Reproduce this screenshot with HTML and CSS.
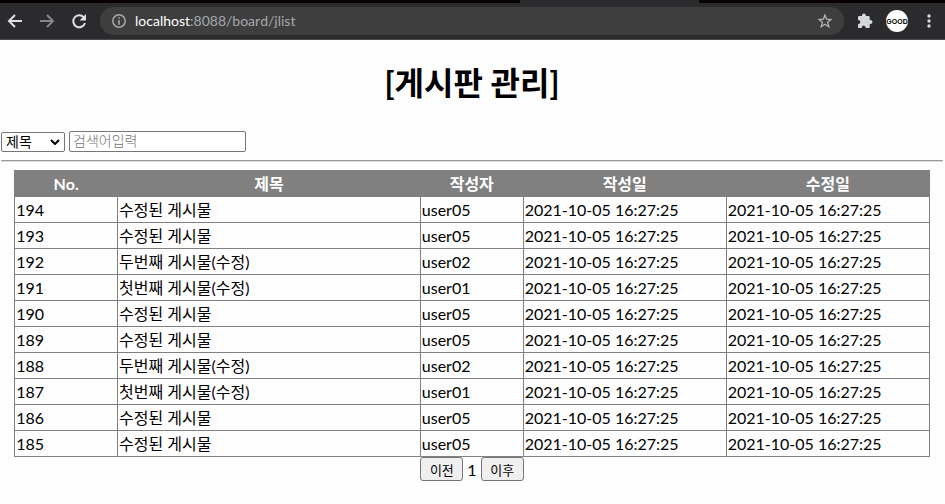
FILE: index.html
```html
<!DOCTYPE html>
<html lang="ko">

<head>
    <meta charset="UTF-8">
    <meta name="viewport" content="width=device-width, initial-scale=1.0">
    <title>게시판 관리</title>
    <link rel="stylesheet" href="styles.css">
</head>

<body>
    <header class="browser">
        <div class="tab-strip">
            <div class="active-tab"></div>
        </div>
        <div class="toolbar">
            <nav class="nav-buttons">
                <button class="icon-button" type="button" aria-label="뒤로">
                    <svg width="16" height="16" viewBox="0 0 16 16" fill="none" stroke="#dfe1e5" stroke-width="2"><path d="M15 8H2M8 2L2 8l6 6"/></svg>
                </button>
                <button class="icon-button" type="button" aria-label="앞으로">
                    <svg width="16" height="16" viewBox="0 0 16 16" fill="none" stroke="#85878a" stroke-width="2"><path d="M1 8h13M8 2l6 6-6 6"/></svg>
                </button>
                <button class="icon-button" type="button" aria-label="새로고침">
                    <svg width="16" height="16" viewBox="0 0 16 16"><path d="M12.800 4.300A6 6 0 1 0 14 10" fill="none" stroke="#dfe1e5" stroke-width="2"/><path d="M15 1v6.500H8.500z" fill="#dfe1e5"/></svg>
                </button>
            </nav>
            <div class="address-bar">
                <svg width="14" height="14" viewBox="0 0 14 14"><circle cx="7" cy="7" r="6.200" fill="none" stroke="#a5a8ac" stroke-width="1.500"/><path d="M6.200 3.300h1.600v1.500H6.200zM6.200 6h1.600v4.700H6.200z" fill="#a5a8ac"/></svg>
                <div class="url"><span class="host">localhost</span>:8088/board/jlist</div>
                <svg width="14" height="14" viewBox="0 0 14 14" fill="none" stroke="#b4b7bb" stroke-width="1.300"><path d="M7 1l1.600 4.200 4.500.3-3.500 2.800 1.200 4.400L7 10.300l-3.800 2.400 1.200-4.400L.9 5.500l4.500-.3z"/></svg>
            </div>
            <button class="icon-button" type="button" aria-label="확장 프로그램">
                <svg width="16" height="16" viewBox="0 0 16 16" fill="#d5d8db"><path d="M1 4.200q0-1.200 1.200-1.200H5q-.3-2.500 1.900-2.500T8.800 3h2.700q1.200 0 1.200 1.200v2.900q2.800-.3 2.800 1.900t-2.800 1.900v3q0 1.200-1.200 1.200H8.700q.1-2.600-2-2.600t-2 2.600H2.200Q1 15.100 1 13.900v-2.700q2.400 0 2.400-2.100T1 7z"/></svg>
            </button>
            <div class="profile">
                <span>GOOD</span>
            </div>
            <button class="icon-button" type="button" aria-label="메뉴">
                <svg width="16" height="16" viewBox="0 0 16 16" fill="#d5d8db"><circle cx="8" cy="3" r="1.700"/><circle cx="8" cy="8" r="1.700"/><circle cx="8" cy="13" r="1.700"/></svg>
            </button>
        </div>
    </header>

    <main>
        <h1>[게시판 관리]</h1>

        <form class="search">
            <div class="select-box">
                <select aria-label="검색 조건">
                    <option>제목</option>
                    <option>작성자</option>
                </select>
                <svg class="arrow" width="10" height="6" viewBox="0 0 10 6" fill="none" stroke="#000" stroke-width="2"><path d="M1 1l4 4 4-4"/></svg>
            </div>
            <input type="text" placeholder="검색어입력" aria-label="검색어">
        </form>
        <hr>

        <table class="board">
            <colgroup>
                <col class="col-narrow">
                <col class="col-title">
                <col class="col-narrow">
                <col>
                <col>
            </colgroup>
            <thead>
                <tr><th>No.</th><th>제목</th><th>작성자</th><th>작성일</th><th>수정일</th></tr>
            </thead>
            <tbody>
                <tr><td>194</td><td>수정된 게시물</td><td>user05</td><td>2021-10-05 16:27:25</td><td>2021-10-05 16:27:25</td></tr>
                <tr><td>193</td><td>수정된 게시물</td><td>user05</td><td>2021-10-05 16:27:25</td><td>2021-10-05 16:27:25</td></tr>
                <tr><td>192</td><td>두번째 게시물(수정)</td><td>user02</td><td>2021-10-05 16:27:25</td><td>2021-10-05 16:27:25</td></tr>
                <tr><td>191</td><td>첫번째 게시물(수정)</td><td>user01</td><td>2021-10-05 16:27:25</td><td>2021-10-05 16:27:25</td></tr>
                <tr><td>190</td><td>수정된 게시물</td><td>user05</td><td>2021-10-05 16:27:25</td><td>2021-10-05 16:27:25</td></tr>
                <tr><td>189</td><td>수정된 게시물</td><td>user05</td><td>2021-10-05 16:27:25</td><td>2021-10-05 16:27:25</td></tr>
                <tr><td>188</td><td>두번째 게시물(수정)</td><td>user02</td><td>2021-10-05 16:27:25</td><td>2021-10-05 16:27:25</td></tr>
                <tr><td>187</td><td>첫번째 게시물(수정)</td><td>user01</td><td>2021-10-05 16:27:25</td><td>2021-10-05 16:27:25</td></tr>
                <tr><td>186</td><td>수정된 게시물</td><td>user05</td><td>2021-10-05 16:27:25</td><td>2021-10-05 16:27:25</td></tr>
                <tr><td>185</td><td>수정된 게시물</td><td>user05</td><td>2021-10-05 16:27:25</td><td>2021-10-05 16:27:25</td></tr>
            </tbody>
        </table>

        <div class="paging">
            <button type="button">이전</button>
            <span>1</span>
            <button type="button">이후</button>
        </div>
    </main>
</body>

</html>
```
FILE: styles.css
```css
* {
    box-sizing: border-box;
}

body {
    margin: 0;
    background: #fefefe;
    color: #000;
    font-family: Lato, "Noto Sans CJK KR", sans-serif;
    font-size: 16px;
    font-kerning: none;
}

/* 브라우저 상단 */
.browser {
    background: #2b2b2d;
    border-bottom: 1px solid #4a4a4c;
}

.tab-strip {
    height: 3px;
    background: #080003;
}

.active-tab {
    width: 19%;
    height: 3px;
    margin-left: 55%;
    background: #2b2b2d;
}

.toolbar {
    display: flex;
    align-items: center;
    height: 36px;
    padding: 0 8px 0 7px;
    gap: 13px;
}

.nav-buttons {
    display: flex;
    gap: 16px;
}

.icon-button {
    display: flex;
    padding: 0;
    border: none;
    background: none;
}

.address-bar {
    flex: 1;
    display: flex;
    align-items: center;
    gap: 9px;
    height: 28px;
    padding: 0 12px;
    border-radius: 14px;
    background: #3e3e3e;
}

.url {
    flex: 1;
    color: #a5a8ac;
    font-size: 14px;
    line-height: 18px;
}

.host {
    color: #fff;
}

.profile {
    display: flex;
    align-items: center;
    justify-content: center;
    width: 22px;
    height: 22px;
    border-radius: 50%;
    background: #fff;
    color: #000;
    font-family: "Liberation Sans", sans-serif;
    font-size: 7px;
    font-weight: bold;
}

/* 게시판 */
main {
    padding: 0 2px 0 1px;
}

h1 {
    margin: 20px 0;
    font-size: 32px;
    font-weight: bold;
    line-height: 46px;
    text-align: center;
}

.search {
    display: flex;
    align-items: center;
    gap: 4px;
    margin-top: 25px;
}

.select-box {
    position: relative;
    display: flex;
}

.search select,
.search input {
    border: 1px solid #767676;
    border-radius: 2px;
    background: #fff;
    color: #000;
    font-family: "Noto Sans CJK KR", sans-serif;
    font-size: 14px;
    line-height: 16px;
}

.search select {
    appearance: none;
    width: 64px;
    height: 20px;
    padding: 0 4px 2px;
}

.arrow {
    position: absolute;
    top: 7px;
    right: 5px;
    pointer-events: none;
}

.search input {
    width: 177px;
    height: 21px;
    padding: 0 3px 3px;
}

.search input::placeholder {
    color: #757575;
    font-weight: 300;
}

hr {
    height: 2px;
    margin: 8px 0;
    border: 1px solid #ddd;
    border-top-color: #96969e;
}

.board {
    width: 97.2%;
    margin: 0 auto;
    border-collapse: collapse;
    table-layout: fixed;
    line-height: 23px;
}

.col-narrow {
    width: 11.25%;
}

.col-title {
    width: 33.1%;
}

.board th,
.board td {
    padding: 1px;
    border: 1px solid #808080;
}

.board th {
    background: #808080;
    color: #fff;
    font-weight: bold;
}

.paging {
    display: flex;
    align-items: center;
    justify-content: center;
    gap: 4px;
}

.paging button {
    width: 43px;
    height: 24px;
    padding: 0;
    border: 1px solid #767676;
    border-radius: 3px;
    background: #efefef;
    color: #000;
    font-family: "Noto Sans CJK KR", sans-serif;
    font-size: 13px;
}
```
